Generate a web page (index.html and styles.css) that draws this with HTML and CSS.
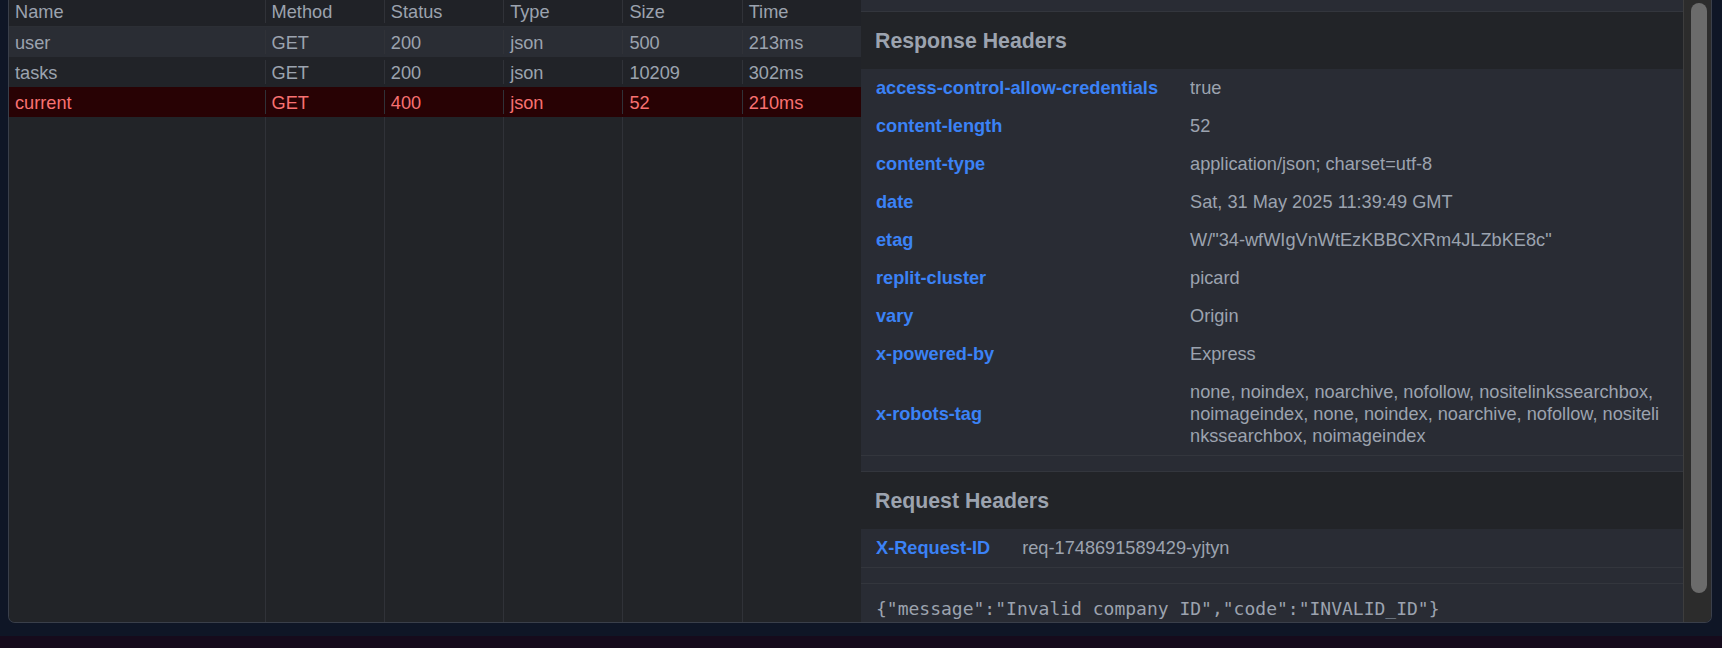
FILE: index.html
```html
<!DOCTYPE html>
<html lang="en">
<head>
<meta charset="utf-8">
<title>Network</title>
<link rel="stylesheet" href="styles.css">
</head>
<body>
<div class="page">
  <div class="panel">
    <div class="requests">
      <div class="row head">
        <div class="cell">Name</div><div class="cell">Method</div><div class="cell">Status</div><div class="cell">Type</div><div class="cell">Size</div><div class="cell">Time</div>
      </div>
      <div class="row req first">
        <div class="cell">user</div><div class="cell">GET</div><div class="cell">200</div><div class="cell">json</div><div class="cell">500</div><div class="cell">213ms</div>
      </div>
      <div class="row req alt">
        <div class="cell">tasks</div><div class="cell">GET</div><div class="cell">200</div><div class="cell">json</div><div class="cell">10209</div><div class="cell">302ms</div>
      </div>
      <div class="row req error">
        <div class="cell">current</div><div class="cell">GET</div><div class="cell">400</div><div class="cell">json</div><div class="cell">52</div><div class="cell">210ms</div>
      </div>
      <div class="row filler">
        <div class="cell"></div><div class="cell"></div><div class="cell"></div><div class="cell"></div><div class="cell"></div><div class="cell"></div>
      </div>
    </div>
    <div class="details">
      <div class="scroll">
        <div class="prev"></div>
        <section class="hsec">
          <h3 class="hsec-title">Response Headers</h3>
          <table class="htable">
            <tr><td class="k">access-control-allow-credentials</td><td class="v">true</td></tr>
            <tr><td class="k">content-length</td><td class="v">52</td></tr>
            <tr><td class="k">content-type</td><td class="v">application/json; charset=utf-8</td></tr>
            <tr><td class="k">date</td><td class="v">Sat, 31 May 2025 11:39:49 GMT</td></tr>
            <tr><td class="k">etag</td><td class="v">W/"34-wfWIgVnWtEzKBBCXRm4JLZbKE8c"</td></tr>
            <tr><td class="k">replit-cluster</td><td class="v">picard</td></tr>
            <tr><td class="k">vary</td><td class="v">Origin</td></tr>
            <tr><td class="k">x-powered-by</td><td class="v">Express</td></tr>
            <tr><td class="k">x-robots-tag</td><td class="v">none, noindex, noarchive, nofollow, nositelinkssearchbox, noimageindex, none, noindex, noarchive, nofollow, nositelinkssearchbox, noimageindex</td></tr>
          </table>
        </section>
        <section class="hsec">
          <h3 class="hsec-title">Request Headers</h3>
          <table class="htable">
            <tr><td class="k">X-Request-ID</td><td class="v">req-1748691589429-yjtyn</td></tr>
          </table>
        </section>
        <pre class="resp-body">{"message":"Invalid company ID","code":"INVALID_ID"}</pre>
      </div>
      <div class="scrollbar"><div class="thumb"></div></div>
    </div>
  </div>
  <div class="gap"></div>
  <div class="footer"></div>
</div>
</body>
</html>
```

FILE: styles.css
```css
html, body {
  margin: 0;
  padding: 0;
}

body {
  background: #0f1626;
  font-family: "Liberation Sans", Arial, sans-serif;
  font-size: 18.2px;
  color: #9ca3af;
  height: 648px;
  overflow: hidden;
}

.page {
  display: flex;
  flex-direction: column;
  height: 648px;
}

.panel {
  height: 623px;
  box-sizing: border-box;
  margin: 0 10px 0 8px;
  border: 1px solid #3a3f4a;
  border-top: none;
  border-radius: 0 0 7px 7px;
  overflow: hidden;
  display: flex;
  background: #222428;
}

.gap {
  height: 13px;
  background: #0f1626;
}

.footer {
  height: 12px;
  background: #160b1c;
}

/* requests list */
.requests {
  flex: 0 0 852px;
  display: flex;
  flex-direction: column;
}

.row {
  display: grid;
  grid-template-columns: 30% 14% 14% 14% 14% 14%;
}

.cell {
  padding: 0 6px;
  line-height: 22px;
  border-left: 1px solid #303238;
  white-space: nowrap;
  overflow: hidden;
}

.cell:first-child {
  border-left: none;
}

.row.head {
  height: 26px;
  background: #202227;
  align-items: start;
}

.row.head .cell {
  padding-top: 1px;
}

.row.req {
  height: 30px;
  align-items: center;
  background: #2a2d34;
}

.row.req .cell {
  padding-top: 2px;
}

.row.first {
  border-top: 1px solid #2c2f35;
}

.row.alt {
  background: #212328;
}

.row.error {
  background: #280204;
  color: #f87171;
}

.row.filler {
  flex: 1;
  background: #222428;
}

/* details */
.details {
  flex: 1;
  display: flex;
  min-width: 0;
  background: #292c34;
}

.scroll {
  flex: 1;
  min-width: 0;
  overflow: hidden;
}

.prev {
  height: 11px;
}

.hsec {
  border-top: 1px solid #33363d;
  border-bottom: 1px solid #33363d;
  margin-bottom: 15px;
}

.hsec-title {
  margin: 0;
  padding: 17px 14px 15px;
  font-size: 21.3px;
  line-height: 25px;
  font-weight: bold;
  background: #222428;
  color: #9ca3af;
}

.htable {
  border-collapse: collapse;
  width: 100%;
}

.htable td {
  padding: 8px 15px;
  line-height: 22px;
  vertical-align: middle;
}

.htable .k {
  color: #3b82f6;
  font-weight: bold;
  white-space: nowrap;
  width: 1%;
}

.htable .v {
  color: #9ca3af;
  word-break: break-all;
  padding-left: 17px;
  padding-right: 18px;
}

.resp-body {
  margin: 0;
  border-top: 1px solid #33363d;
  padding: 14px 15px;
  font-family: "DejaVu Sans Mono", "Liberation Mono", monospace;
  font-size: 18px;
  line-height: 22px;
  color: #9ca3af;
  white-space: pre-wrap;
}

.scrollbar {
  flex: 0 0 28px;
  box-sizing: border-box;
  background: #2c2c2c;
  border-left: 1px solid #3d3d3d;
  padding: 3px 0 0 7px;
}

.thumb {
  width: 16px;
  height: 590px;
  border-radius: 8px;
  background: #6b6b6b;
}
```
